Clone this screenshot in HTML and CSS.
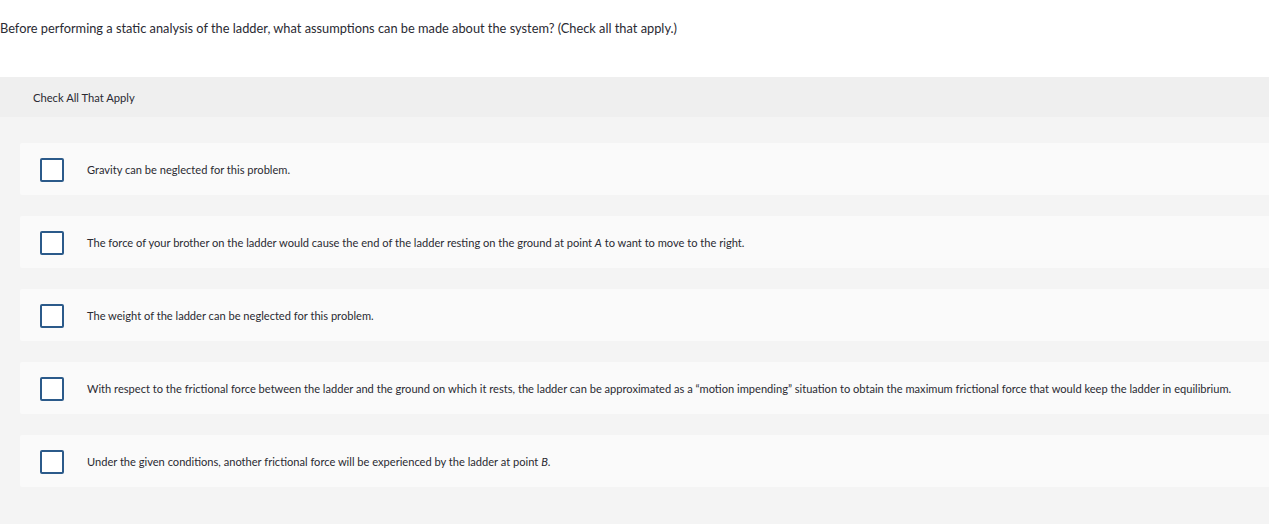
FILE: index.html
```html
<!DOCTYPE html>
<html>
<head>
<meta charset="utf-8">
<link rel="stylesheet" href="styles.css">
</head>
<body>
<p class="question">Before performing a static analysis of the ladder, what assumptions can be made about the system? (Check all that apply.)</p>
<div class="panel">
  <div class="panel-head">Check All That Apply</div>
  <div class="choices">
    <label class="choice"><span class="box"></span><span class="text">Gravity can be neglected for this problem.</span></label>
    <label class="choice"><span class="box"></span><span class="text">The force of your brother on the ladder would cause the end of the ladder resting on the ground at point <i>A</i> to want to move to the right.</span></label>
    <label class="choice"><span class="box"></span><span class="text">The weight of the ladder can be neglected for this problem.</span></label>
    <label class="choice"><span class="box"></span><span class="text">With respect to the frictional force between the ladder and the ground on which it rests, the ladder can be approximated as a “motion impending” situation to obtain the maximum frictional force that would keep the ladder in equilibrium.</span></label>
    <label class="choice"><span class="box"></span><span class="text">Under the given conditions, another frictional force will be experienced by the ladder at point <i>B</i>.</span></label>
  </div>
</div>
</body>
</html>
```
FILE: styles.css
```css
html, body {
  margin: 0;
  padding: 0;
  background: #ffffff;
  font-family: Lato, "Liberation Sans", sans-serif;
  color: #2a2a32;
}
body {
  height: 524px;
  overflow: hidden;
}
.question {
  margin: 0;
  padding: 20px 0 0 0;
  font-size: 12.8px;
  line-height: 16px;
  height: 77px;
  box-sizing: border-box;
}
.panel {
  background: #f4f4f4;
}
.panel-head {
  background: #efefef;
  height: 40px;
  display: flex;
  align-items: center;
  padding-left: 33px;
  font-size: 11.2px;
}
.choices {
  display: flex;
  flex-direction: column;
  gap: 21px;
  padding: 26px 0 60px 20px;
}
.choice {
  display: flex;
  align-items: center;
  height: 52px;
  background: #fafafa;
  padding-left: 20px;
  border-radius: 2px 0 0 2px;
}
.box {
  width: 24px;
  height: 24px;
  box-sizing: border-box;
  border: 2px solid #2b5a8a;
  border-radius: 2px;
  background: #ffffff;
  flex: none;
  margin-top: 1px;
}
.text {
  margin-left: 23px;
  font-size: 11.1px;
}
```
